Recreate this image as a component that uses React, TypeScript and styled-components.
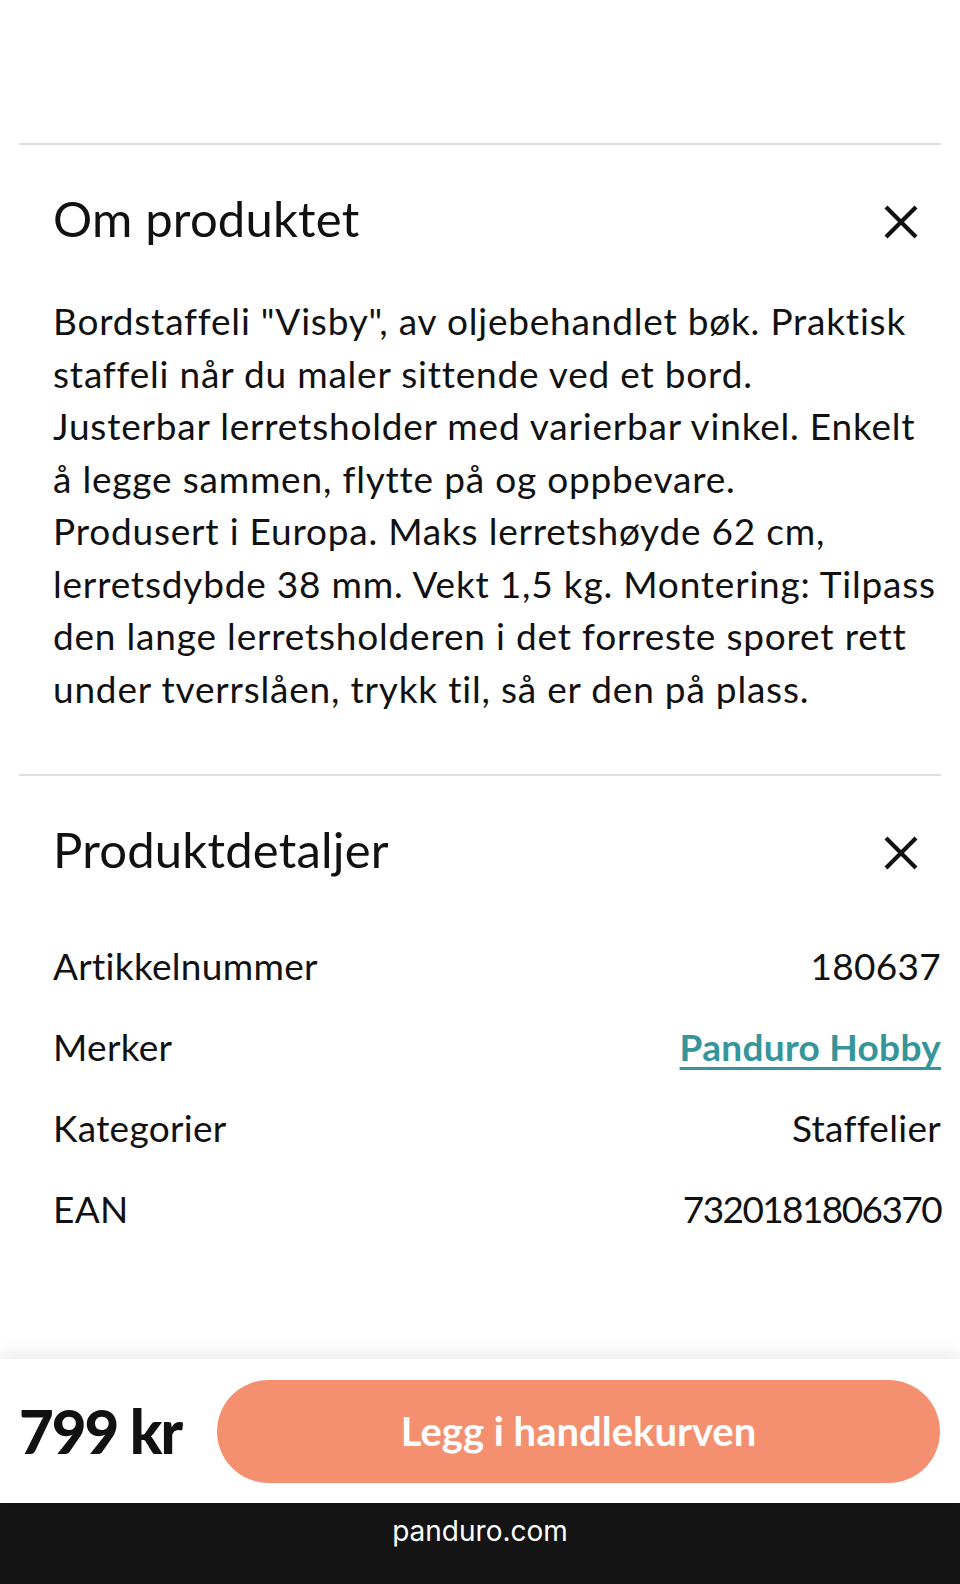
import React from "react";
import styled, { createGlobalStyle } from "styled-components";

const tekster = {
  omProduktet: {
    header: "Om produktet",
    // linjene brytes som i originalen
    beskrivelse: [
      'Bordstaffeli "Visby", av oljebehandlet bøk. Praktisk',
      "staffeli når du maler sittende ved et bord.",
      "Justerbar lerretsholder med varierbar vinkel. Enkelt",
      "å legge sammen, flytte på og oppbevare.",
      "Produsert i Europa. Maks lerretshøyde 62 cm,",
      "lerretsdybde 38 mm. Vekt 1,5 kg. Montering: Tilpass",
      "den lange lerretsholderen i det forreste sporet rett",
      "under tverrslåen, trykk til, så er den på plass.",
    ],
  },
  produktdetaljer: {
    header: "Produktdetaljer",
  },
  pris: "799 kr",
  knapp: "Legg i handlekurven",
  url: "panduro.com",
};

const detaljer = [
  { label: "Artikkelnummer", verdi: "180637" },
  { label: "Merker", verdi: "Panduro Hobby", lenke: true },
  { label: "Kategorier", verdi: "Staffelier" },
  { label: "EAN", verdi: "7320181806370", tall: true },
];

const GlobalStyle = createGlobalStyle`
  html, body {
    margin: 0;
    padding: 0;
    background: #ffffff;
  }
  body {
    font-family: Lato, "Open Sans", sans-serif;
    color: #111111;
  }
`;

const Side = styled.div`
  display: flex;
  flex-direction: column;
  height: 1584px;
  overflow: hidden;
`;

const Innhold = styled.main`
  flex: 1;
  padding-top: 143px;
`;

const Seksjon = styled.section`
  margin: 0 19px;
  border-top: 2px solid #dedede;
  padding: 45px 0 0 34px;
`;

const SeksjonHeader = styled.div`
  display: flex;
  align-items: center;
  justify-content: space-between;
  padding-right: 23px;
`;

const Tittel = styled.h2`
  margin: 0;
  font-size: 49px;
  line-height: 56px;
  font-weight: 400;
  letter-spacing: 0.2px;
`;

const LukkKnapp = styled.button`
  display: flex;
  padding: 0;
  border: 0;
  background: none;
  cursor: pointer;
  margin-top: 7px;
`;

const Beskrivelse = styled.p`
  margin: 49px 0 0;
  padding: 0 0 59px 0;
  font-size: 37px;
  line-height: 52.5px;
  font-weight: 400;
  letter-spacing: 0.8px;
  white-space: nowrap;
`;

const DetaljListe = styled.dl`
  margin: 48px 0 0;
  padding: 0;
`;

const DetaljRad = styled.div`
  display: flex;
  justify-content: space-between;
  font-size: 37px;
  line-height: 81px;
  letter-spacing: 0.3px;
`;

const DetaljLabel = styled.dt`
  margin: 0;
`;

const DetaljVerdi = styled.dd<{ $lenke?: boolean; $tall?: boolean }>`
  margin: 0;
  color: ${(p) => (p.$lenke ? "#36959a" : "#111111")};
  font-weight: ${(p) => (p.$lenke ? 700 : 400)};
  letter-spacing: ${(p) => (p.$tall ? "-1.6px" : "0.3px")};
  text-decoration: ${(p) => (p.$lenke ? "underline" : "none")};
  text-underline-offset: 6px;
  text-decoration-thickness: 3px;
`;

const Kjopsbar = styled.div`
  display: flex;
  align-items: center;
  gap: 36px;
  height: 144px;
  padding: 0 20px 0 19px;
  background: #ffffff;
  box-shadow: 0 -8px 14px rgba(0, 0, 0, 0.07);
  position: relative;
`;

const Pris = styled.div`
  font-size: 60px;
  font-weight: 900;
  letter-spacing: -2px;
  white-space: nowrap;
`;

const Handlekurv = styled.button`
  flex: 1;
  height: 103px;
  border: 0;
  border-radius: 52px;
  background: #f4906f;
  color: #ffffff;
  font-family: Lato, sans-serif;
  font-size: 40px;
  font-weight: 700;
  cursor: pointer;
`;

const Nettleserlinje = styled.div`
  height: 81px;
  background: #141414;
  color: #ffffff;
  display: flex;
  justify-content: center;
  padding-top: 12px;
  box-sizing: border-box;
  font-family: Inter, "Liberation Sans", sans-serif;
  font-size: 28px;
  line-height: 32px;
`;

const Kryss = () => (
  <svg width="34" height="34" viewBox="0 0 34 34" aria-hidden="true">
    <path
      d="M2 2 L32 32 M32 2 L2 32"
      stroke="#111111"
      strokeWidth="4.2"
      fill="none"
    />
  </svg>
);

const SeksjonTopp = ({ tittel }: { tittel: string }) => (
  <SeksjonHeader>
    <Tittel>{tittel}</Tittel>
    <LukkKnapp aria-label="Lukk">
      <Kryss />
    </LukkKnapp>
  </SeksjonHeader>
);

const App = () => (
  <>
    <GlobalStyle />
    <Side>
      <Innhold>
        <Seksjon>
          <SeksjonTopp tittel={tekster.omProduktet.header} />
          <Beskrivelse>
            {tekster.omProduktet.beskrivelse.map((linje, index) => (
              <React.Fragment key={index}>
                {index > 0 && <br />}
                {linje}
              </React.Fragment>
            ))}
          </Beskrivelse>
        </Seksjon>
        <Seksjon>
          <SeksjonTopp tittel={tekster.produktdetaljer.header} />
          <DetaljListe>
            {detaljer.map((d) => (
              <DetaljRad key={d.label}>
                <DetaljLabel>{d.label}</DetaljLabel>
                <DetaljVerdi $lenke={d.lenke} $tall={d.tall}>
                  {d.verdi}
                </DetaljVerdi>
              </DetaljRad>
            ))}
          </DetaljListe>
        </Seksjon>
      </Innhold>
      <Kjopsbar>
        <Pris>{tekster.pris}</Pris>
        <Handlekurv>{tekster.knapp}</Handlekurv>
      </Kjopsbar>
      <Nettleserlinje>{tekster.url}</Nettleserlinje>
    </Side>
  </>
);

export default App;
